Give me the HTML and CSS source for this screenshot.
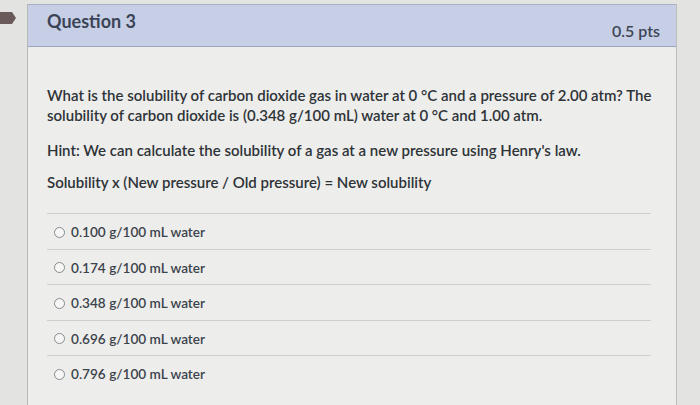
FILE: index.html
```html
<!DOCTYPE html>
<html>
<head>
<meta charset="utf-8">
<link rel="stylesheet" href="styles.css">
</head>
<body>
<div class="page">
  <div class="gutter"><div class="flag"></div></div>
  <div class="card">
    <div class="header">
      <span class="title">Question 3</span>
      <span class="pts">0.5 pts</span>
    </div>
    <div class="body">
      <p class="q q1">What is the solubility of carbon dioxide gas in water at 0 °C and a pressure of 2.00 atm? The solubility of carbon dioxide is (0.348 g/100 mL) water at 0 °C and 1.00 atm.</p>
      <p class="q q2">Hint: We can calculate the solubility of a gas at a new pressure using Henry's law.</p>
      <p class="q q3">Solubility x (New pressure / Old pressure) = New solubility</p>
      <div class="answers">
        <div class="ans"><span class="radio"></span>0.100 g/100 mL water</div>
        <div class="ans"><span class="radio"></span>0.174 g/100 mL water</div>
        <div class="ans"><span class="radio"></span>0.348 g/100 mL water</div>
        <div class="ans"><span class="radio"></span>0.696 g/100 mL water</div>
        <div class="ans"><span class="radio"></span>0.796 g/100 mL water</div>
      </div>
    </div>
  </div>
</div>
</body>
</html>
```
FILE: styles.css
```css
html, body { margin: 0; padding: 0; }
body {
  width: 700px; height: 405px; overflow: hidden;
  background: #e3e3e1;
  font-family: Lato, "Liberation Sans", sans-serif;
}
.page { display: flex; height: 405px; }
.gutter { width: 27px; flex: none; padding-top: 12px; box-sizing: border-box; }
.flag {
  width: 16px; height: 12px; background: #6a5a5a;
  clip-path: polygon(0 0, 75% 0, 100% 50%, 75% 100%, 0 100%);
}
.card {
  width: 648px; flex: none;
  background: #ededeb;
  border-left: 1px solid #b9b9b9;
  border-right: 1px solid #bcbcbc;
  margin-top: 4px;
}
.header {
  height: 41px;
  background: #c6cfe5;
  border-top: 1px solid #a9b0c2;
  border-bottom: 1px solid #9ea6ba;
  display: flex; justify-content: space-between; align-items: center;
  padding: 0 16px 0 19px;
}
.title { font-weight: 700; font-size: 18px; color: #3b4457; margin-top: -10px; }
.pts { font-size: 16px; color: #3e4656; margin-top: 10px; font-weight: 600; }
.body { padding: 38px 18px 0 19px; }
.q { margin: 0; font-size: 15px; line-height: 20px; color: #2e3338; font-weight: 600; }
.q2 { margin-top: 15px; }
.q3 { margin-top: 12px; }
.answers { margin-top: 21px; margin-right: 7px; }
.ans {
  height: 35.5px; border-top: 1px solid #cfcfcd;
  display: flex; align-items: center;
  padding-left: 7px; padding-top: 2px; box-sizing: border-box;
  font-size: 13.6px; color: #3c434c; font-weight: 600;
}
.radio {
  width: 9px; height: 9px; border: 1px solid #888c90; border-radius: 50%;
  background: #f6f6f4; margin-right: 6px; flex: none;
}
```
